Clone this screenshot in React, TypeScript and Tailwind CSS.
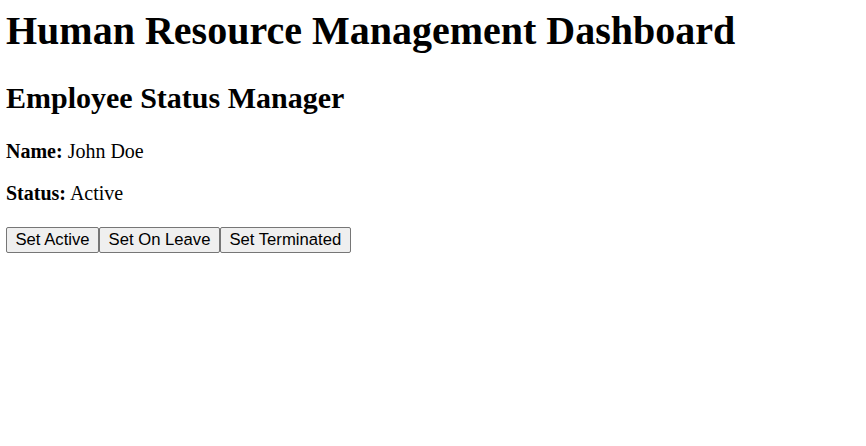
import { useState } from 'react';

const STATUSES = ['Active', 'On Leave', 'Terminated'];

export default function App() {
  const [status, setStatus] = useState('Active');

  return (
    <div className="min-h-screen bg-white pl-[6px] pt-[8px] font-['Liberation_Serif',serif] text-black">
      <h1 className="mb-[27px] text-[40px] font-bold leading-[46px]">
        Human Resource Management Dashboard
      </h1>
      <h2 className="mb-[24px] text-[30px] font-bold leading-[34.5px]">
        Employee Status Manager
      </h2>
      <p className="mb-[19px] text-[20px] leading-[23px]">
        <strong>Name:</strong> John Doe
      </p>
      <p className="mb-[22px] text-[20px] leading-[23px]">
        <strong>Status:</strong> {status}
      </p>
      <div className="flex">
        {STATUSES.map((s) => (
          <button
            key={s}
            onClick={() => setStatus(s)}
            className="h-[26px] rounded-[2px] border border-[#767676] bg-[#efefef] px-[8.5px] font-['Liberation_Sans',Arial,sans-serif] text-[16.67px] leading-[19px] text-black hover:bg-[#e5e5e5]"
          >
            Set {s}
          </button>
        ))}
      </div>
    </div>
  );
}
